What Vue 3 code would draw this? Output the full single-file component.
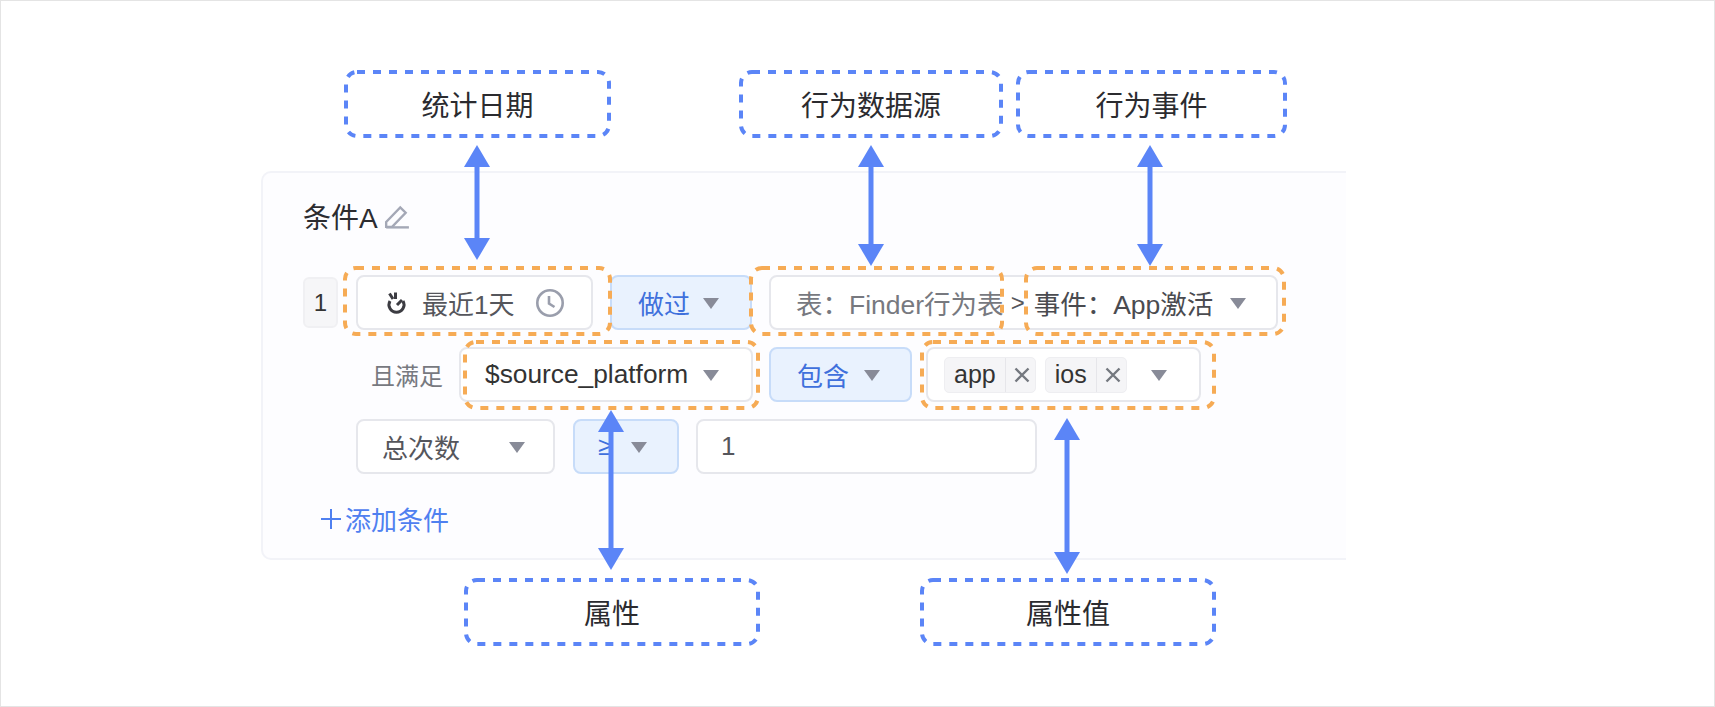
<template>
  <div class="page">
    <div class="panel">
      <div class="title">
        条件A
        <svg class="editIcon" width="26" height="26" viewBox="0 0 24 24" fill="none" stroke="#a4a8b6" stroke-width="2.2">
          <path d="M2 17.5 L15 4 L20 9 L7.5 22 H2 Z" />
          <path d="M2 22.5 H23" />
        </svg>
      </div>

      <div class="row">
        <span class="badge">1</span>
        <div class="select dateSelect">
          <svg class="handIcon" width="22" height="24" viewBox="0 0 22 24" fill="none" stroke="#3c3c42" stroke-width="3">
            <path d="M5 10 A7.5 7.5 0 1 0 18 10" />
            <path d="M4.5 2.5 L8 8 M10.5 1.5 V8 M17 9 L12 14" />
          </svg>
          <span class="dateText">最近1天</span>
          <svg width="30" height="30" viewBox="0 0 30 30" fill="none" stroke="#9a9eac" stroke-width="2.6">
            <circle cx="15" cy="15" r="12.7" />
            <path d="M14 8 V15.5 L19.5 19" />
          </svg>
        </div>
        <div class="select op didSelect">
          <span>做过</span>
          <i class="caret"></i>
        </div>
        <div class="select eventSelect">
          <span class="sourceText">表：Finder行为表</span>
          <span class="chevron">&gt;</span>
          <span class="eventText">事件：App激活</span>
          <i class="caret"></i>
        </div>
      </div>

      <div class="row">
        <span class="satisfy">且满足</span>
        <div class="select propSelect">
          <span class="propText">$source_platform</span>
          <i class="caret"></i>
        </div>
        <div class="select op includeSelect">
          <span>包含</span>
          <i class="caret"></i>
        </div>
        <div class="select valueSelect">
          <div v-for="tag in tags" :key="tag" class="tag">
            <span class="tagName">{{ tag }}</span>
            <span class="tagClose">
              <svg width="16" height="16" viewBox="0 0 16 16" stroke="#74787f" stroke-width="2.4">
                <path d="M1.5 1.5 L14.5 14.5 M14.5 1.5 L1.5 14.5" />
              </svg>
            </span>
          </div>
          <i class="caret valueCaret"></i>
        </div>
      </div>

      <div class="row lastRow">
        <div class="select countSelect">
          <span>总次数</span>
          <i class="caret"></i>
        </div>
        <div class="select op compareSelect">
          <span>≥</span>
          <i class="caret"></i>
        </div>
        <div class="select numberInput">1</div>
      </div>

      <div class="addCondition">
        <svg width="22" height="22" viewBox="0 0 22 22" stroke="#4f80f0" stroke-width="2">
          <path d="M1 11 H21 M11 1 V21" />
        </svg>
        <span>添加条件</span>
      </div>
    </div>

    <!-- annotations drawn over the form -->
    <svg class="overlay" width="1715" height="707">
      <rect
        v-for="box in orangeBoxes"
        :key="box.x"
        :x="box.x"
        :y="box.y"
        :width="box.w"
        :height="box.h"
        rx="11"
        fill="none"
        stroke="#f6ab55"
        stroke-width="4"
        stroke-dasharray="8 8"
      />
      <rect
        v-for="box in blueBoxes"
        :key="box.text"
        :x="box.x"
        :y="box.y"
        :width="box.w"
        :height="box.h"
        rx="11"
        fill="none"
        stroke="#5b85f7"
        stroke-width="4"
        stroke-dasharray="8 8"
      />
      <g v-for="a in arrows" :key="a.x" fill="#5b85f7">
        <rect :x="a.x - 2.5" :y="a.top + 20" width="5" :height="a.bottom - a.top - 40" />
        <path :d="`M${a.x} ${a.top} L${a.x + 13} ${a.top + 22} H${a.x - 13} Z`" />
        <path :d="`M${a.x} ${a.bottom} L${a.x + 13} ${a.bottom - 22} H${a.x - 13} Z`" />
      </g>
    </svg>

    <div
      v-for="box in blueBoxes"
      :key="box.text"
      class="boxLabel"
      :style="{ left: box.x + 'px', top: box.y + 'px', width: box.w + 'px', height: box.h + 'px' }"
    >
      {{ box.text }}
    </div>
  </div>
</template>

<script setup>
const tags = ['app', 'ios']

const orangeBoxes = [
  { x: 345, y: 268, w: 265, h: 66 },
  { x: 751, y: 268, w: 251, h: 66 },
  { x: 1026, y: 268, w: 258, h: 66 },
  { x: 465, y: 342, w: 293, h: 66 },
  { x: 922, y: 342, w: 292, h: 66 },
]

const blueBoxes = [
  { text: '统计日期', x: 346, y: 72, w: 263, h: 64 },
  { text: '行为数据源', x: 741, y: 72, w: 260, h: 64 },
  { text: '行为事件', x: 1018, y: 72, w: 267, h: 64 },
  { text: '属性', x: 466, y: 580, w: 292, h: 64 },
  { text: '属性值', x: 922, y: 580, w: 292, h: 64 },
]

const arrows = [
  { x: 477, top: 145, bottom: 260 },
  { x: 871, top: 145, bottom: 266 },
  { x: 1150, top: 145, bottom: 266 },
  { x: 611, top: 410, bottom: 570 },
  { x: 1067, top: 418, bottom: 574 },
]
</script>

<style>
html,
body {
  margin: 0;
  background: #fff;
}
</style>

<style scoped>
.page {
  position: relative;
  box-sizing: border-box;
  width: 1715px;
  height: 707px;
  padding: 170px 0 0 260px;
  border: 1px solid #e4e4e4;
  background: #fff;
  overflow: hidden;
  font-family: 'Liberation Sans', 'Noto Sans CJK SC', sans-serif;
  color: #333;
}

.panel {
  box-sizing: border-box;
  width: 1085px;
  height: 389px;
  padding: 26px 0 0 40px;
  background: #fdfdff;
  border: 2px solid #f2f3f8;
  border-right: none;
  border-radius: 10px 0 0 10px;
}

.title {
  display: flex;
  align-items: center;
  height: 34px;
  font-size: 28px;
  color: #2c2c30;
}

.editIcon {
  margin-left: 6px;
}

.row {
  display: flex;
  align-items: center;
  height: 55px;
  margin-top: 17px;
}

.row:nth-of-type(2) {
  margin-top: 42px;
}

.lastRow {
  margin-left: 53px;
}

.badge {
  box-sizing: border-box;
  display: flex;
  align-items: center;
  justify-content: center;
  width: 35px;
  height: 51px;
  margin-right: 18px;
  background: #f6f6f8;
  border: 2px solid #f0f0f3;
  border-radius: 6px;
  font-size: 24px;
}

.satisfy {
  width: 88px;
  margin-left: 68px;
  margin-right: 0;
  font-size: 24px;
  color: #77797f;
  white-space: nowrap;
}

.select {
  box-sizing: border-box;
  display: flex;
  align-items: center;
  height: 55px;
  background: #fff;
  border: 2px solid #e6e7ec;
  border-radius: 8px;
  font-size: 26px;
  color: #55565c;
  white-space: nowrap;
}

.op {
  background: #e9f2fe;
  border-color: #c7dcf9;
  color: #3f70dc;
}

.caret {
  flex: none;
  width: 0;
  height: 0;
  margin-top: 2px;
  border-left: 8px solid transparent;
  border-right: 8px solid transparent;
  border-top: 11px solid #888b98;
}

.dateSelect {
  width: 237px;
  padding-left: 27px;
  margin-right: 17px;
}

.dateText {
  margin-left: 15px;
  margin-right: 21px;
  color: #55565c;
}

.didSelect {
  width: 142px;
  padding-left: 26px;
  margin-right: 17px;
}

.didSelect .caret {
  margin-left: 13px;
}

.eventSelect {
  width: 509px;
  padding-left: 25px;
}

.sourceText {
  font-size: 26.5px;
  color: #77797f;
}

.chevron {
  margin-left: 7px;
  font-size: 24px;
  color: #55565c;
}

.eventText {
  margin-left: 9px;
  font-size: 26.5px;
  color: #4a4b50;
}

.eventText + .caret {
  margin-left: 17px;
}

.propSelect {
  width: 294px;
  padding-left: 24px;
  margin-right: 16px;
}

.propText {
  font-size: 26.3px;
  color: #333;
}

.propText + .caret {
  margin-left: 15px;
}

.includeSelect {
  width: 143px;
  padding-left: 26px;
  margin-right: 14px;
}

.includeSelect .caret {
  margin-left: 15px;
}

.valueSelect {
  width: 275px;
  padding-left: 16px;
}

.tag {
  box-sizing: border-box;
  display: flex;
  align-items: center;
  height: 36px;
  margin-right: 9px;
  background: #f5f5f7;
  border: 1px solid #eeeef1;
  border-radius: 5px;
  font-size: 25px;
  color: #333;
}

.tagName {
  padding: 0 9px;
}

.tagClose {
  display: flex;
  align-items: center;
  height: 100%;
  padding: 0 5px 0 8px;
  border-left: 1px solid #e6e6ea;
}

.valueCaret {
  margin-left: 15px;
}

.countSelect {
  width: 199px;
  padding-left: 24px;
  margin-right: 18px;
}

.countSelect .caret {
  margin-left: 49px;
}

.compareSelect {
  width: 106px;
  padding-left: 23px;
  margin-right: 17px;
}

.compareSelect .caret {
  margin-left: 19px;
}

.numberInput {
  width: 341px;
  padding-left: 23px;
}

.addCondition {
  display: flex;
  align-items: center;
  gap: 3px;
  margin-top: 26px;
  margin-left: 17px;
  font-size: 26px;
  color: #4f80f0;
}

.overlay {
  position: absolute;
  left: -1px;
  top: -1px;
  pointer-events: none;
}

.boxLabel {
  position: absolute;
  display: flex;
  align-items: center;
  justify-content: center;
  margin: -1px 0 0 -1px;
  font-size: 28px;
  color: #2b2b2f;
}
</style>
